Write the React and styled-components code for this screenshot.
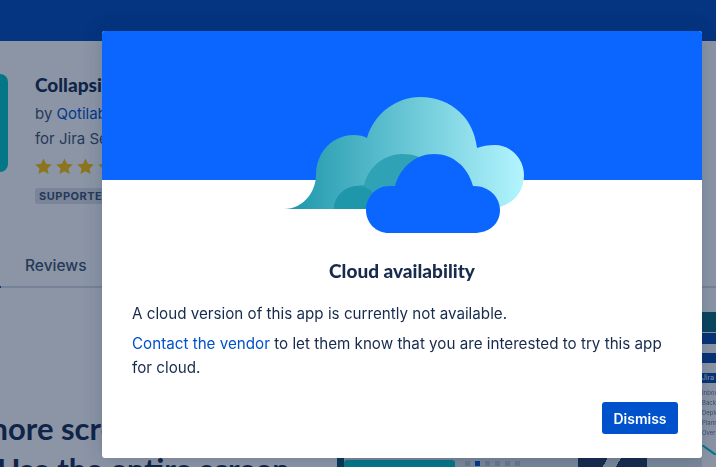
import React from "react";
import styled, { createGlobalStyle } from "styled-components";

const GlobalStyle = createGlobalStyle`
  html, body {
    margin: 0;
    height: 100%;
    overflow: hidden;
    background: #fff;
    font-family: Inter, "Liberation Sans", sans-serif;
    color: #172b4d;
  }
`;

const App = () => (
  <>
    <GlobalStyle />
    <Page>
      <TopBar />
      <Hero>
        <AppIcon />
        <HeroText>
          <AppName>Collapsible Sections</AppName>
          <VendorLine>
            by <VendorLink>Qotilabs</VendorLink>
          </VendorLine>
          <Byline>for Jira Server</Byline>
          <Stars>
            {[0, 1, 2, 3].map((star) => (
              <Star key={star} viewBox="0 0 20 20">
                <path d="M10 1.5l2.6 5.6 6.1.7-4.5 4.2 1.2 6L10 15l-5.4 3 1.2-6L1.300 7.800l6.100-.7z" />
              </Star>
            ))}
          </Stars>
          <Badge>SUPPORTED</Badge>
        </HeroText>
      </Hero>
      <Tabs>
        <TabLabel>Reviews</TabLabel>
      </Tabs>
      <Overview>
        <Pitch>
          <PitchTitle>more screen space</PitchTitle>
          <PitchTitle>l Use the entire screen</PitchTitle>
        </Pitch>
        <Shot>
          <ShotEdge />
          <ShotCard />
          <ShotIcons>
            <ShotIcon />
            <ShotIcon $active />
            <ShotIcon />
            <ShotIcon />
            <ShotIcon />
            <ShotIcon />
          </ShotIcons>
          <ShotDark />
        </Shot>
        <SideShot>
          <ShotBand />
          <ShotBar $gap={1} />
          <ShotBar $gap={9} />
          <ShotLabel>Jira</ShotLabel>
          <ShotLines>
            <ShotLine>Inbound</ShotLine>
            <ShotLine>Backlog</ShotLine>
            <ShotLine>Deploy</ShotLine>
            <ShotLine>Planning</ShotLine>
            <ShotLine>Overview</ShotLine>
          </ShotLines>
          <ShotCurve viewBox="0 0 14 10">
            <path d="M0 0L14 10" />
          </ShotCurve>
        </SideShot>
      </Overview>
    </Page>
    <Overlay>
      <Modal>
        <ModalHero />
        <CloudArt viewBox="0 0 240 140" aria-hidden="true">
          <defs>
            <linearGradient id="cloudBack" x1="0" x2="1" y1="0" y2="0">
              <stop offset="0" stopColor="#1b95a9" />
              <stop offset="1" stopColor="#b3f5ff" />
            </linearGradient>
          </defs>
          <path
            fill="url(#cloudBack)"
            d="M0 112C20 112 32 94 32 78C32 54 50 38 69 38C75 38 80 39 83 41C90 17 112 0 136 0C168 0 190 22 193 51C198 49 204 48 211 48C227 48 240 62 240 78C240 96 228 110 205 112Z"
          />
          <path
            fill="#2fa2b6"
            d="M50 112C50 100 60 89 80 88C85 68 102 57 118 57C140 57 155 70 160 90L160 112Z"
          />
          <path fill="#1f97aa" d="M50 112C50 99 61 89 73 89C87 89 96 100 96 112Z" />
          <path
            fill="#0b66ff"
            d="M111 89C116 70 132 57 150 57C169 57 184 70 189 89H190C205 89 216 100 216 113C216 127 205 136 190 136H105C92 136 82 126 82 113C82 100 92 89 105 89Z"
          />
        </CloudArt>
        <ModalBody>
          <ModalTitle>Cloud availability</ModalTitle>
          <Paragraph>A cloud version of this app is currently not available.</Paragraph>
          <Paragraph>
            <ContactLink>Contact the vendor</ContactLink> to let them know that you are
            interested to try this app for cloud.
          </Paragraph>
          <ModalFooter>
            <DismissButton>Dismiss</DismissButton>
          </ModalFooter>
        </ModalBody>
      </Modal>
    </Overlay>
  </>
);

const Page = styled.div`
  width: 716px;
  height: 467px;
  overflow: hidden;
`;

const TopBar = styled.div`
  height: 41px;
  background: #0249b7;
`;

const Hero = styled.div`
  display: flex;
  gap: 27px;
  padding-top: 33px;
`;

const AppIcon = styled.div`
  width: 8px;
  height: 98px;
  background: #00c7c4;
  border-radius: 0 8px 8px 0;
`;

const HeroText = styled.div`
  display: flex;
  flex-direction: column;
  align-items: flex-start;
`;

const AppName = styled.div`
  font-family: Lato, sans-serif;
  font-size: 19px;
  font-weight: 900;
  line-height: 22px;
  color: #172b4d;
  white-space: nowrap;
`;

const Byline = styled.div`
  font-size: 15px;
  line-height: 25px;
  color: #42526e;
  white-space: nowrap;
`;

const VendorLine = styled(Byline)`
  margin-top: 5px;
`;

const VendorLink = styled.span`
  color: #0052cc;
`;

const Stars = styled.div`
  display: flex;
  gap: 2px;
  margin: 6px 0 0 -1px;
`;

const Star = styled.svg`
  width: 19px;
  height: 19px;
  fill: #ffc400;
`;

const Badge = styled.div`
  margin-top: 12px;
  padding: 0 4px;
  height: 16px;
  line-height: 16px;
  border-radius: 3px;
  background: #dfe1e6;
  color: #42526e;
  font-size: 11px;
  font-weight: 700;
  letter-spacing: 0.5px;
`;

const Tabs = styled.div`
  position: relative;
  margin-top: 49px;
  height: 35px;
  padding: 1px 0 0 25px;
  box-sizing: border-box;
  border-bottom: 2px solid #d8dce3;

  &::before {
    content: "";
    position: absolute;
    left: 0;
    bottom: -2px;
    width: 1px;
    height: 2px;
    background: #0052cc;
  }
`;

const TabLabel = styled.div`
  font-size: 15.5px;
  font-weight: 500;
  line-height: 24px;
  color: #42526e;
`;

const Overview = styled.div`
  display: flex;
  height: 179px;
`;

const Pitch = styled.div`
  width: 355px;
  flex: none;
  padding-top: 120px;
  margin-left: -18px;
`;

const PitchTitle = styled.div`
  font-family: Lato, sans-serif;
  font-size: 31px;
  font-weight: 700;
  line-height: 41px;
  white-space: nowrap;
  color: #172b4d;
`;

const Shot = styled.div`
  width: 365px;
  height: 9px;
  margin-top: 170px;
  flex: none;
  display: flex;
  background: #dfe5ea;
`;

const ShotEdge = styled.div`
  width: 7px;
  background: #0b4f6c;
`;

const ShotCard = styled.div`
  width: 111px;
  margin-top: 2px;
  border-radius: 3px 3px 0 0;
  background: #00c7c4;
`;

const ShotIcons = styled.div`
  flex: 1;
  display: flex;
  gap: 5px;
  padding: 3px 0 0 10px;
  filter: blur(0.4px);
`;

const ShotIcon = styled.div`
  width: 5px;
  height: 5px;
  background: ${(props) => (props.$active ? "#0052cc" : "#c1c7d0")};
`;

const ShotDark = styled.div`
  width: 69px;
  margin-right: 55px;
  background: linear-gradient(120deg, #253858 40%, #dfe5ea 40%, #dfe5ea 58%, #253858 58%);
`;

const SideShot = styled.div`
  margin-top: 24px;
  width: 14px;
  flex: none;
  overflow: hidden;
  background: #fff;
  filter: blur(0.4px);
`;

const ShotBand = styled.div`
  height: 20px;
  background: #0e6a76;
`;

const ShotBar = styled.div`
  height: 10.5px;
  margin-top: ${(props) => props.$gap}px;
  background: #0747a6;
`;

const ShotLabel = styled.div`
  height: 10px;
  margin-top: 10px;
  background: #0747a6;
  color: #fff;
  font-size: 7px;
  line-height: 10px;
`;

const ShotLines = styled.div`
  padding-top: 5px;
`;

const ShotLine = styled.div`
  font-size: 6px;
  line-height: 10px;
  color: #6b778c;
  white-space: nowrap;
`;

const ShotCurve = styled.svg`
  display: block;
  width: 14px;
  height: 10px;
  margin-top: 7px;
  fill: none;
  stroke: #00c7c4;
  stroke-width: 2;
`;

const Overlay = styled.div`
  position: fixed;
  inset: 0;
  background: rgba(9, 30, 66, 0.47);
`;

const Modal = styled.div`
  position: absolute;
  left: 102px;
  top: 31px;
  width: 600px;
  height: 427px;
  display: flex;
  flex-direction: column;
  background: #fff;
  border-radius: 3px;
  overflow: hidden;
  box-shadow: 0 0 20px rgba(9, 30, 66, 0.2);
`;

const ModalHero = styled.div`
  height: 149px;
  flex: none;
  background: #0b66ff;
`;

const CloudArt = styled.svg`
  position: absolute;
  left: 182px;
  top: 66px;
  width: 240px;
  height: 140px;
`;

const ModalBody = styled.div`
  flex: 1;
  display: flex;
  flex-direction: column;
  padding: 79px 24px 24px 30px;
`;

const ModalTitle = styled.h2`
  margin: 0 0 19px;
  padding-right: 6px;
  font-family: Lato, sans-serif;
  font-size: 19px;
  font-weight: 900;
  line-height: 24px;
  text-align: center;
  color: #172b4d;
`;

const Paragraph = styled.p`
  margin: 0 0 6px;
  font-size: 15.2px;
  line-height: 24px;
  color: #172b4d;
`;

const ContactLink = styled.span`
  color: #0052cc;
`;

const ModalFooter = styled.div`
  margin-top: auto;
  display: flex;
  justify-content: flex-end;
`;

const DismissButton = styled.button`
  width: 76px;
  height: 32px;
  padding: 0;
  border: 0;
  border-radius: 3px;
  background: #0052cc;
  color: #fff;
  font-family: inherit;
  font-size: 14px;
  font-weight: 600;
`;

export default App;
